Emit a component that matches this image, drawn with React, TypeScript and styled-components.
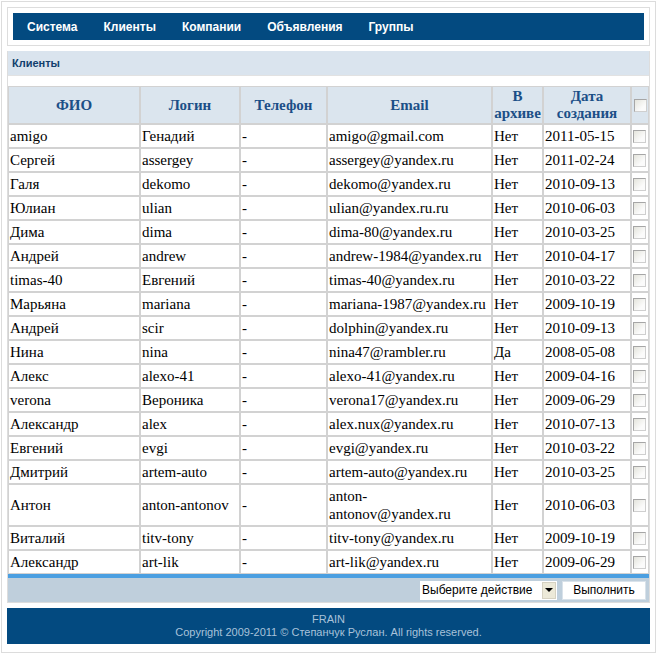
import styled, { createGlobalStyle } from "styled-components";

const GlobalStyle = createGlobalStyle`
  html, body {
    margin: 0;
    padding: 0;
    background: #fff;
  }
  body {
    font-family: "Liberation Sans", Arial, sans-serif;
  }
`;

interface Client {
  name: string;
  login: string;
  phone: string;
  email: string;
  archived: string;
  created: string;
}

const clients: Client[] = [
  { name: "amigo", login: "Генадий", phone: "-", email: "amigo@gmail.com", archived: "Нет", created: "2011-05-15" },
  { name: "Сергей", login: "assergey", phone: "-", email: "assergey@yandex.ru", archived: "Нет", created: "2011-02-24" },
  { name: "Галя", login: "dekomo", phone: "-", email: "dekomo@yandex.ru", archived: "Нет", created: "2010-09-13" },
  { name: "Юлиан", login: "ulian", phone: "-", email: "ulian@yandex.ru.ru", archived: "Нет", created: "2010-06-03" },
  { name: "Дима", login: "dima", phone: "-", email: "dima-80@yandex.ru", archived: "Нет", created: "2010-03-25" },
  { name: "Андрей", login: "andrew", phone: "-", email: "andrew-1984@yandex.ru", archived: "Нет", created: "2010-04-17" },
  { name: "timas-40", login: "Евгений", phone: "-", email: "timas-40@yandex.ru", archived: "Нет", created: "2010-03-22" },
  { name: "Марьяна", login: "mariana", phone: "-", email: "mariana-1987@yandex.ru", archived: "Нет", created: "2009-10-19" },
  { name: "Андрей", login: "scir", phone: "-", email: "dolphin@yandex.ru", archived: "Нет", created: "2010-09-13" },
  { name: "Нина", login: "nina", phone: "-", email: "nina47@rambler.ru", archived: "Да", created: "2008-05-08" },
  { name: "Алекс", login: "alexo-41", phone: "-", email: "alexo-41@yandex.ru", archived: "Нет", created: "2009-04-16" },
  { name: "verona", login: "Вероника", phone: "-", email: "verona17@yandex.ru", archived: "Нет", created: "2009-06-29" },
  { name: "Александр", login: "alex", phone: "-", email: "alex.nux@yandex.ru", archived: "Нет", created: "2010-07-13" },
  { name: "Евгений", login: "evgi", phone: "-", email: "evgi@yandex.ru", archived: "Нет", created: "2010-03-22" },
  { name: "Дмитрий", login: "artem-auto", phone: "-", email: "artem-auto@yandex.ru", archived: "Нет", created: "2010-03-25" },
  { name: "Антон", login: "anton-antonov", phone: "-", email: "anton-antonov@yandex.ru", archived: "Нет", created: "2010-06-03" },
  { name: "Виталий", login: "titv-tony", phone: "-", email: "titv-tony@yandex.ru", archived: "Нет", created: "2009-10-19" },
  { name: "Александр", login: "art-lik", phone: "-", email: "art-lik@yandex.ru", archived: "Нет", created: "2009-06-29" },
];

const menu = ["Система", "Клиенты", "Компании", "Объявления", "Группы"];

const serif = `"Liberation Serif", "Times New Roman", serif`;

const Page = styled.div`
  margin: 1px;
  border: 1px solid #dcdcdc;
  padding: 5px 5px 8px;
`;

const MenuBox = styled.div`
  border: 1px solid #dddddd;
  padding: 5px;
`;

const Nav = styled.nav`
  display: flex;
  height: 27px;
  align-items: center;
  padding-left: 1px;
  background: #034a80;
`;

const NavItem = styled.a`
  padding: 0 13px;
  color: #fff;
  font-weight: bold;
  font-size: 12px;
  text-decoration: none;
  cursor: pointer;
`;

const Panel = styled.section`
  margin-top: 5px;
  border: 1px solid #dddddd;
  border-top: none;
`;

const PanelTitle = styled.h2`
  margin: 0;
  height: 24px;
  line-height: 24px;
  padding: 0 4px;
  background: #dae4ee;
  border-bottom: 1px solid #e2e2e2;
  color: #123f6c;
  font-size: 11px;
  font-weight: bold;
`;

const Table = styled.table`
  margin-top: 10px;
  width: 100%;
  table-layout: fixed;
  border-collapse: separate;
  border-spacing: 0;
  font-family: ${serif};
`;

const Th = styled.th`
  height: 34px;
  padding: 1px 0;
  border: 1px solid #d2d2d2;
  background: #dbe5ee;
  color: #1b4f87;
  font-family: ${serif};
  font-size: 15px;
  line-height: 17px;
  font-weight: bold;
  text-align: center;
  vertical-align: middle;
`;

const Td = styled.td<{ $center?: boolean }>`
  padding: 2px 2px 2px 1px;
  border: 1px solid #d2d2d2;
  color: #000;
  font-family: ${serif};
  font-size: 15px;
  line-height: 18px;
  text-align: ${(p) => (p.$center ? "center" : "left")};
  vertical-align: middle;
  overflow: hidden;
`;

const Check = styled.input.attrs({ type: "checkbox" })`
  appearance: none;
  display: block;
  margin: 0 auto;
  width: 13px;
  height: 13px;
  border: 1px solid #a6a6a6;
  border-right-color: #cfcfcf;
  border-bottom-color: #cfcfcf;
  background: linear-gradient(135deg, #e4e4dc 0%, #fbfbfb 70%);
  cursor: pointer;
`;

const ActionBar = styled.div`
  display: flex;
  justify-content: flex-end;
  align-items: center;
  gap: 5px;
  height: 24px;
  padding: 0 3px;
  border-top: 4px solid #4b9fe1;
  background: #bfcfdc;
`;

const SelectBox = styled.div`
  display: flex;
  align-items: center;
  width: 137px;
  height: 19px;
  background: #fff;
`;

const Select = styled.select`
  appearance: none;
  flex: 1;
  min-width: 0;
  height: 19px;
  padding: 0 0 0 2px;
  border: none;
  background: transparent;
  font-family: "Liberation Sans", Arial, sans-serif;
  font-size: 12px;
  color: #000;
  outline: none;
`;

const Arrow = styled.span`
  display: flex;
  align-items: center;
  justify-content: center;
  width: 14px;
  height: 17px;
  margin-right: 1px;
  background: #ece9d8;
  border: 1px solid #d6d2c2;
  box-sizing: border-box;

  &::after {
    content: "";
    border-left: 4px solid transparent;
    border-right: 4px solid transparent;
    border-top: 4px solid #000;
  }
`;

const Button = styled.button`
  width: 84px;
  height: 19px;
  padding: 0;
  border: 1px solid #d9e2ea;
  background: #fff;
  font-family: "Liberation Sans", Arial, sans-serif;
  font-size: 12px;
  color: #000;
  cursor: pointer;
`;

const Footer = styled.footer`
  margin-top: 5px;
  height: 36px;
  display: flex;
  flex-direction: column;
  justify-content: center;
  align-items: center;
  background: #034a80;
  color: #a9c2da;
  font-size: 11px;
  line-height: 13px;
`;

const widths = [132, 100, 87, 165, 51, 88, 18];

const App = () => {
  return (
    <>
      <GlobalStyle />
      <Page>
        <MenuBox>
          <Nav>
            {menu.map((m) => (
              <NavItem key={m}>{m}</NavItem>
            ))}
          </Nav>
        </MenuBox>

        <Panel>
          <PanelTitle>Клиенты</PanelTitle>
          <Table>
            <colgroup>
              {widths.map((w, i) => (
                <col key={i} style={{ width: w }} />
              ))}
            </colgroup>
            <thead>
              <tr>
                <Th>ФИО</Th>
                <Th>Логин</Th>
                <Th>Телефон</Th>
                <Th>Email</Th>
                <Th>В архиве</Th>
                <Th>Дата создания</Th>
                <Th>
                  <Check />
                </Th>
              </tr>
            </thead>
            <tbody>
              {clients.map((c, i) => (
                <tr key={i}>
                  <Td>{c.name}</Td>
                  <Td>{c.login}</Td>
                  <Td>{c.phone}</Td>
                  <Td>{c.email}</Td>
                  <Td>{c.archived}</Td>
                  <Td>{c.created}</Td>
                  <Td $center>
                    <Check />
                  </Td>
                </tr>
              ))}
            </tbody>
          </Table>
          <ActionBar>
            <SelectBox>
              <Select defaultValue="">
                <option value="">Выберите действие</option>
                <option value="archive">В архив</option>
                <option value="delete">Удалить</option>
              </Select>
              <Arrow />
            </SelectBox>
            <Button>Выполнить</Button>
          </ActionBar>
        </Panel>

        <Footer>
          <div>FRAIN</div>
          <div>Copyright 2009-2011 © Степанчук Руслан. All rights reserved.</div>
        </Footer>
      </Page>
    </>
  );
};

export default App;
